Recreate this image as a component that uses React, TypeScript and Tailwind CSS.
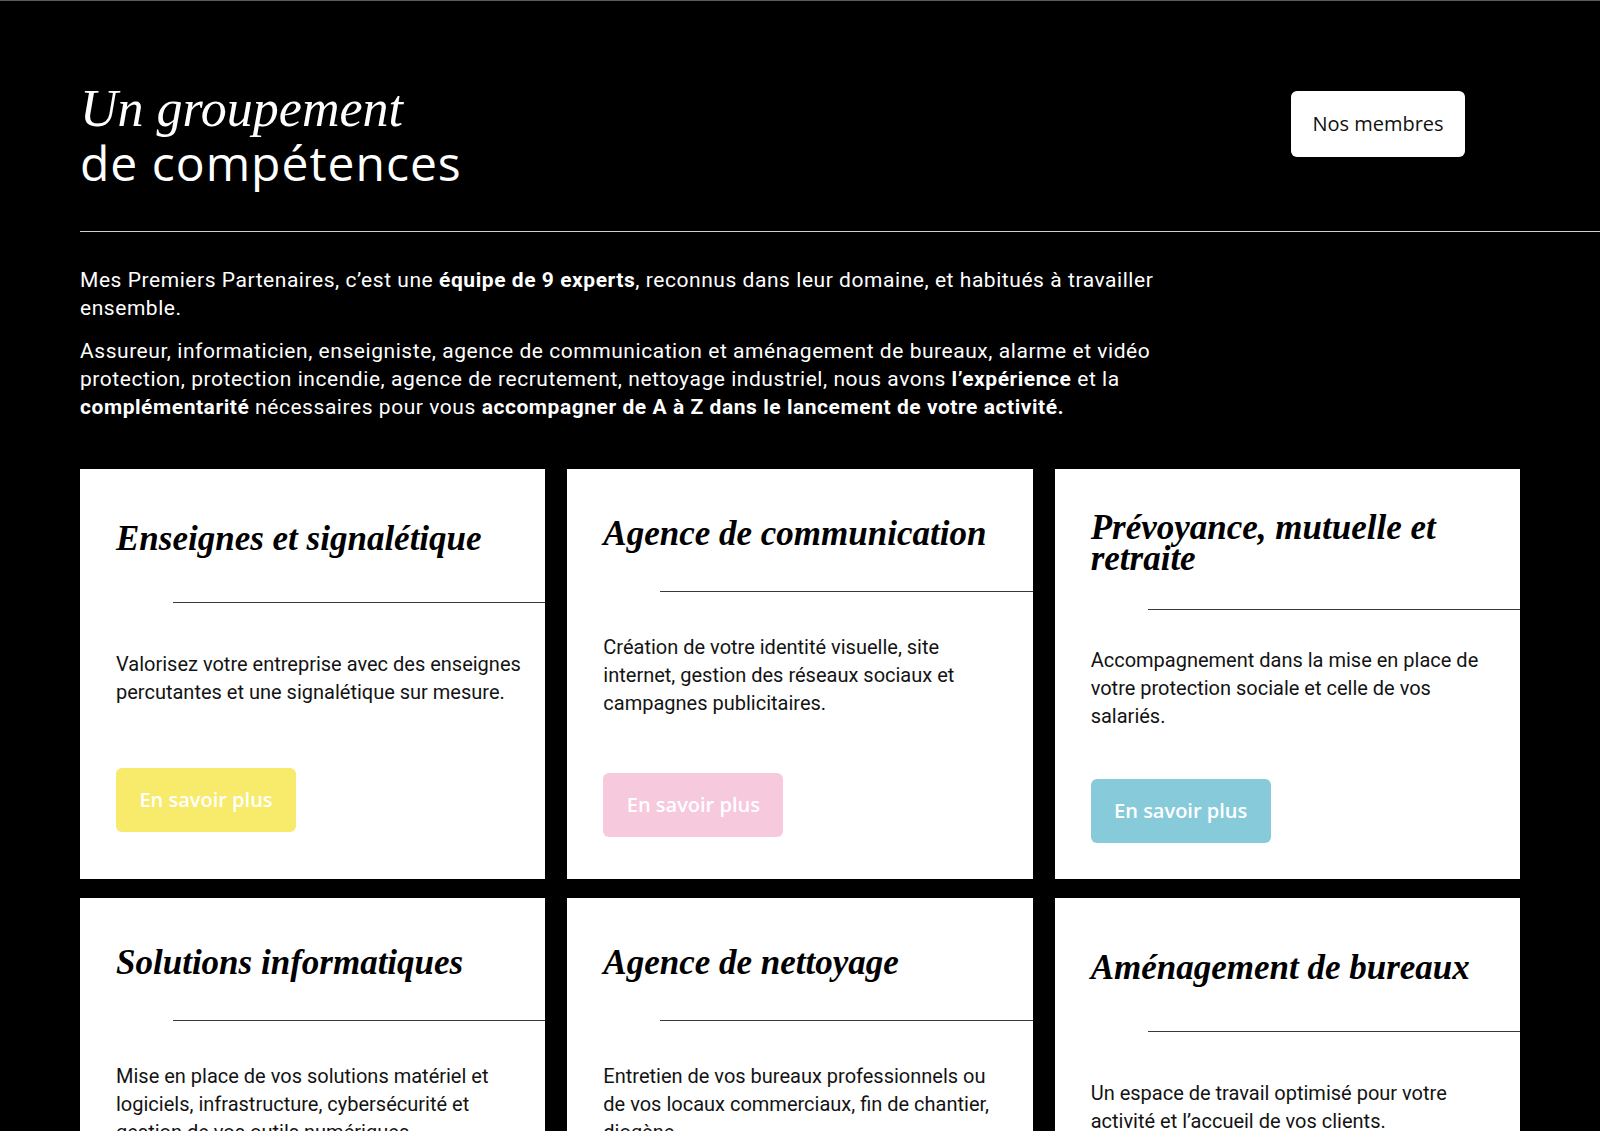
import React from "react";

type Card = {
  title: string;
  desc: string;
  color: string;
};

const cards: Card[] = [
  {
    title: "Enseignes et signalétique",
    desc: "Valorisez votre entreprise avec des enseignes percutantes et une signalétique sur mesure.",
    color: "bg-[#f8ea6a]",
  },
  {
    title: "Agence de communication",
    desc: "Création de votre identité visuelle, site internet, gestion des réseaux sociaux et campagnes publicitaires.",
    color: "bg-[#f6c9dd]",
  },
  {
    title: "Prévoyance, mutuelle et retraite",
    desc: "Accompagnement dans la mise en place de votre protection sociale et celle de vos salariés.",
    color: "bg-[#87cbdb]",
  },
  {
    title: "Solutions informatiques",
    desc: "Mise en place de vos solutions matériel et logiciels, infrastructure, cybersécurité et gestion de vos outils numériques.",
    color: "bg-[#f8ea6a]",
  },
  {
    title: "Agence de nettoyage",
    desc: "Entretien de vos bureaux professionnels ou de vos locaux commerciaux, fin de chantier, diogène.",
    color: "bg-[#f6c9dd]",
  },
  {
    title: "Aménagement de bureaux",
    desc: "Un espace de travail optimisé pour votre activité et l’accueil de vos clients.",
    color: "bg-[#87cbdb]",
  },
];

const serif = "font-['Liberation_Serif','Times_New_Roman',serif]";
const sans = "font-['Open_Sans','Noto_Sans',sans-serif]";
const roboto = "font-['Roboto','Liberation_Sans',sans-serif]";

function ServiceCard({ card }: { card: Card }) {
  return (
    <div className="flex h-[410px] flex-col justify-evenly bg-white pl-9 pr-[22px]">
      <h3 className={`${serif} mt-[7px] text-[35px] font-bold italic leading-[31px] text-black`}>
        {card.title}
      </h3>
      <div className="-mr-[22px] ml-[57px] h-px bg-[#3a3a3a]" />
      <p className={`${roboto} text-[20px] leading-[28px] text-[#131313]`}>{card.desc}</p>
      <div className="mt-[14px]">
        <a
          href="#"
          className={`${sans} ${card.color} inline-flex h-[64px] w-[180px] items-center justify-center rounded-[6px] text-[20px] font-semibold text-white`}
        >
          En savoir plus
        </a>
      </div>
    </div>
  );
}

export default function App() {
  return (
    <div className="min-h-screen overflow-hidden border-t border-[#5a5a5a] bg-black pl-[80px]">
      <div className="pr-[80px]">
        <header className="flex items-start justify-between pt-[82px]">
          <h1 className="text-white">
            <span className={`${serif} block text-[52px] font-normal italic leading-[51px]`}>
              Un groupement
            </span>
            <span
              className={`${sans} block text-[48px] font-medium leading-[57px] tracking-[1px]`}
            >
              de compétences
            </span>
          </h1>
          <a
            href="#"
            className={`${sans} mr-[55px] mt-[8px] flex h-[66px] w-[174px] items-center justify-center rounded-[6px] bg-white text-[20px] font-medium text-[#111]`}
          >
            Nos membres
          </a>
        </header>
      </div>

      <div className="mt-[40px] h-px bg-[#d0d0d0]" />

      <div className="pr-[80px]">
        <div
          className={`${roboto} mt-[34px] max-w-[1120px] text-[21px] leading-[28px] tracking-[0.55px] text-white`}
        >
          <p>
            Mes Premiers Partenaires, c’est une <strong className="font-bold">équipe de 9 experts</strong>,
            reconnus dans leur domaine, et habitués à travailler ensemble.
          </p>
          <p className="mt-[15px]">
            Assureur, informaticien, enseigniste, agence de communication et aménagement de bureaux,
            alarme et vidéo protection, protection incendie, agence de recrutement, nettoyage
            industriel, nous avons <strong className="font-bold">l’expérience</strong> et la{" "}
            <strong className="font-bold">complémentarité</strong> nécessaires pour vous{" "}
            <strong className="font-bold">
              accompagner de A à Z dans le lancement de votre activité.
            </strong>
          </p>
        </div>

        <div className="mt-[48px] grid grid-cols-3 gap-x-[22px] gap-y-[19px]">
          {cards.map((c) => (
            <ServiceCard key={c.title} card={c} />
          ))}
        </div>
      </div>
    </div>
  );
}
